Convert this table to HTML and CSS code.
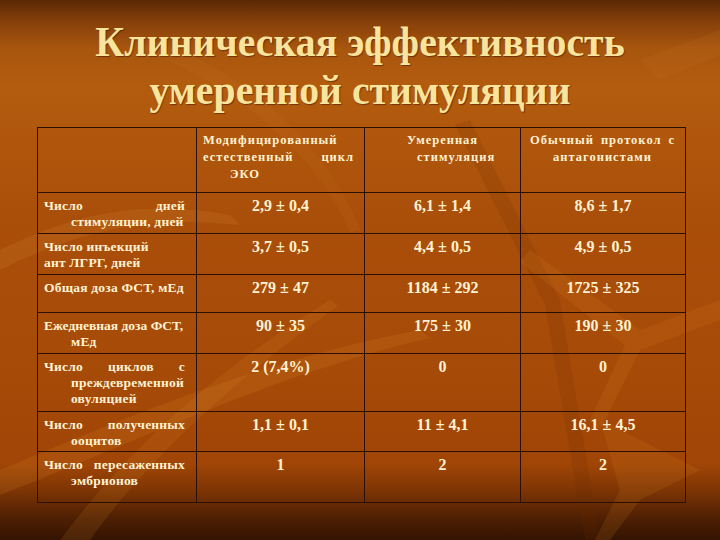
FILE: index.html
```html
<!DOCTYPE html>
<html lang="ru">
<head>
<meta charset="utf-8">
<title>Клиническая эффективность умеренной стимуляции</title>
<link rel="stylesheet" href="styles.css">
</head>
<body>
<div class="slide">
  <svg class="deco" width="720" height="540" viewBox="0 0 720 540" aria-hidden="true">
    <path d="M0 250 C 80 210, 150 200, 230 215 L 240 225 C 150 215, 80 230, 0 270 Z" fill="#d98a30" opacity="0.18"/>
    <path d="M0 470 C 120 420, 260 360, 420 330 L 430 338 C 280 372, 140 440, 0 495 Z" fill="#e0902e" opacity="0.16"/>
    <path d="M60 540 C 120 460, 200 380, 330 300 L 338 306 C 220 390, 140 470, 90 540 Z" fill="#e0902e" opacity="0.13"/>
    <path d="M470 120 L 560 300 L 600 540 L 585 540 L 545 305 L 455 125 Z" fill="#6a2a02" opacity="0.16"/>
    <path d="M530 250 L 640 330 L 720 300 L 720 320 L 640 350 L 600 430 L 590 420 L 625 345 L 520 262 Z" fill="#d88428" opacity="0.16"/>
    <path d="M600 420 L 700 470 L 640 500 L 610 540 L 595 540 L 620 490 Z" fill="#d88428" opacity="0.15"/>
    <path d="M150 40 C 250 70, 330 150, 360 230 L 350 232 C 320 160, 240 85, 140 50 Z" fill="#c8742a" opacity="0.13"/>
    <path d="M640 60 L 720 30 L 720 55 L 660 80 Z" fill="#c8742a" opacity="0.15"/>
  </svg>
  <h1 class="title">Клиническая эффективность<br>умеренной стимуляции</h1>
  <table class="grid">
    <colgroup>
      <col class="c1"><col class="c2"><col class="c3"><col class="c4">
    </colgroup>
    <thead>
      <tr class="r-head">
        <th></th>
        <th class="hd hd2">
          <div>Модифицированный</div>
          <div class="spread"><span>естественный</span><span>цикл</span></div>
          <div class="ind-eko">ЭКО</div>
        </th>
        <th class="hd hd3">
          <div>Умеренная</div>
          <div class="sub3">стимуляция</div>
        </th>
        <th class="hd hd4">
          <div class="spread"><span>Обычный</span><span>протокол</span><span>с</span></div>
          <div class="center">антагонистами</div>
        </th>
      </tr>
    </thead>
    <tbody>
      <tr class="r1">
        <td class="lbl"><div class="spread"><span>Число</span><span>дней</span></div><div class="ind">стимуляции, дней</div></td>
        <td class="val">2,9 ± 0,4</td><td class="val">6,1 ± 1,4</td><td class="val">8,6 ± 1,7</td>
      </tr>
      <tr class="r2">
        <td class="lbl"><div>Число инъекций</div><div>ант ЛГРГ, дней</div></td>
        <td class="val">3,7 ± 0,5</td><td class="val">4,4 ± 0,5</td><td class="val">4,9 ± 0,5</td>
      </tr>
      <tr class="r3">
        <td class="lbl"><div>Общая доза ФСТ, мЕд</div></td>
        <td class="val">279 ± 47</td><td class="val">1184 ± 292</td><td class="val">1725 ± 325</td>
      </tr>
      <tr class="r4">
        <td class="lbl"><div class="tight">Ежедневная доза ФСТ,</div><div class="ind">мЕд</div></td>
        <td class="val">90 ± 35</td><td class="val">175 ± 30</td><td class="val">190 ± 30</td>
      </tr>
      <tr class="r5">
        <td class="lbl"><div class="spread"><span>Число</span><span>циклов</span><span>с</span></div><div class="ind">преждевременной</div><div class="ind">овуляцией</div></td>
        <td class="val">2 (7,4%)</td><td class="val">0</td><td class="val">0</td>
      </tr>
      <tr class="r6">
        <td class="lbl"><div class="spread"><span>Число</span><span>полученных</span></div><div class="ind">ооцитов</div></td>
        <td class="val">1,1 ± 0,1</td><td class="val">11 ± 4,1</td><td class="val">16,1 ± 4,5</td>
      </tr>
      <tr class="r7">
        <td class="lbl"><div class="spread"><span>Число</span><span>пересаженных</span></div><div class="ind">эмбрионов</div></td>
        <td class="val">1</td><td class="val">2</td><td class="val">2</td>
      </tr>
    </tbody>
  </table>
</div>
</body>
</html>
```

FILE: styles.css
```css
html, body {
  margin: 0;
  padding: 0;
}

body {
  width: 720px;
  height: 540px;
  overflow: hidden;
  font-family: "Liberation Serif", "Times New Roman", serif;
}

.slide {
  position: relative;
  width: 720px;
  height: 540px;
  display: flex;
  flex-direction: column;
  align-items: flex-start;
  background: linear-gradient(to bottom,
    #5a2904 0%,
    #86400a 4%,
    #a8560e 9%,
    #b35c0e 16%,
    #aa4f0a 40%,
    #a64a08 70%,
    #a04506 86%,
    #7c3404 91%,
    #4e1f03 96%,
    #341402 100%);
}

.deco {
  position: absolute;
  left: 0;
  top: 0;
  z-index: 0;
}

.title {
  position: relative;
  z-index: 1;
  align-self: stretch;
  margin: 18px 0 0 0;
  font-size: 43px;
  line-height: 48px;
  font-weight: bold;
  text-align: center;
  color: #f8e49c;
  text-shadow: 1px 1px 1px rgba(60, 20, 0, 0.55);
  transform: scaleX(0.925);
}

.grid {
  position: relative;
  z-index: 1;
  margin: 13px 0 0 37px;
  width: 648px;
  border-collapse: collapse;
  table-layout: fixed;
  color: #fff2d2;
  font-weight: bold;
}

.c1 { width: 159px; }
.c2 { width: 168px; }
.c3 { width: 156px; }
.c4 { width: 165px; }

.grid th,
.grid td {
  border: 1px solid #2a0f04;
  vertical-align: top;
  padding: 0;
}

.r-head { height: 65px; }
.r1 { height: 41px; }
.r2 { height: 41px; }
.r3 { height: 38px; }
.r4 { height: 41px; }
.r5 { height: 58px; }
.r6 { height: 40px; }
.r7 { height: 51px; }

.grid .hd {
  font-size: 12.5px;
  line-height: 17px;
  letter-spacing: 1px;
  text-align: left;
  white-space: nowrap;
}

.grid .hd2 {
  padding: 4px 10px 0 6px;
}

.grid .hd3 {
  padding: 4px 6px 0 42px;
}

.hd3 .sub3 {
  padding-left: 10px;
}

.grid .hd4 {
  padding: 4px 10px 0 9px;
}

.center {
  text-align: center;
}

.spread {
  display: flex;
  justify-content: space-between;
}

.ind-eko {
  padding-left: 27px;
}

.grid .lbl {
  font-size: 13.5px;
  line-height: 16px;
  letter-spacing: 0.2px;
  padding: 5px 11px 0 6px;
  white-space: nowrap;
}

.lbl .tight {
  letter-spacing: 0;
}

.lbl .ind {
  padding-left: 27px;
}

.grid .val {
  font-size: 16px;
  line-height: 20px;
  text-align: center;
  padding-top: 3px;
}
```
